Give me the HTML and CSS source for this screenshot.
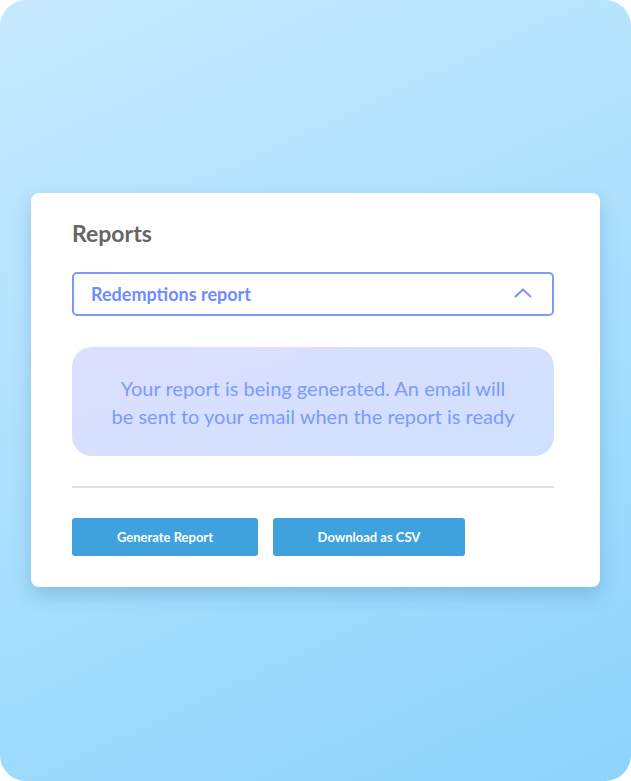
FILE: index.html
```html
<!DOCTYPE html>
<html>
<head>
<meta charset="utf-8">
<link rel="stylesheet" href="styles.css">
</head>
<body>
<div class="frame">
  <div class="card">
    <h1 class="title">Reports</h1>
    <div class="select">
      <span class="select-label">Redemptions report</span>
      <svg class="chevron" width="18" height="10" viewBox="0 0 18 10">
        <defs>
          <linearGradient id="cg" x1="0" y1="0" x2="1" y2="0">
            <stop offset="0" stop-color="#6a8cff"/>
            <stop offset="1" stop-color="#9a8cff"/>
          </linearGradient>
        </defs>
        <path d="M1.5 8.5 L9 1.5 L16.5 8.5" fill="none" stroke="url(#cg)" stroke-width="2" stroke-linecap="round" stroke-linejoin="round"/>
      </svg>
    </div>
    <div class="notice">Your report is being generated. An email will<br>be sent to your email when the report is ready</div>
    <hr class="divider">
    <div class="actions">
      <button class="btn btn-generate">Generate Report</button>
      <button class="btn btn-csv">Download as CSV</button>
    </div>
  </div>
</div>
</body>
</html>
```

FILE: styles.css
```css
html, body {
  margin: 0;
  padding: 0;
  background: #ffffff;
}
body {
  font-family: Lato, "Open Sans", sans-serif;
}
.frame {
  width: 631px;
  height: 781px;
  border-radius: 26px;
  overflow: hidden;
  background: linear-gradient(155deg, #c6e8fe 0%, #b3e3fe 35%, #a1dcfd 65%, #8dd3fc 100%);
  padding-top: 193px;
  box-sizing: border-box;
}
.card {
  margin-left: 31px;
  width: 569px;
  height: 394px;
  box-sizing: border-box;
  background: #fff;
  border-radius: 8px;
  box-shadow: 0 8px 18px rgba(60, 120, 170, 0.3);
  padding: 26px 46px 0 41px;
}
.title {
  margin: 0;
  font-size: 23px;
  line-height: 28px;
  font-weight: 700;
  color: #666666;
}
.select {
  margin-top: 25px;
  height: 44px;
  box-sizing: border-box;
  border: 2px solid #7d9bff;
  border-radius: 5px;
  display: flex;
  align-items: center;
  justify-content: space-between;
  padding: 0 20px 0 17px;
}
.select-label {
  font-size: 18px;
  font-weight: 700;
  color: #6c8cff;
}
.chevron {
  display: block;
  margin-top: -2px;
}
.notice {
  margin-top: 31px;
  height: 109px;
  box-sizing: border-box;
  border-radius: 20px;
  background: linear-gradient(165deg, #dde0ff 0%, #d6e0ff 50%, #cfe0ff 100%);
  color: #7b9aff;
  font-size: 20px;
  line-height: 28px;
  text-align: center;
  padding-top: 27px;
}
.divider {
  margin: 30px 0 0 0;
  border: none;
  height: 2px;
  background: #e0e0e0;
}
.actions {
  margin-top: 30px;
  display: flex;
  gap: 15px;
}
.btn {
  height: 38px;
  border: none;
  border-radius: 3px;
  background: #3fa2dd;
  color: #ffffff;
  font-family: Lato, sans-serif;
  font-size: 13px;
  font-weight: 700;
  padding: 0;
}
.btn-generate { width: 186px; }
.btn-csv { width: 192px; }
```
